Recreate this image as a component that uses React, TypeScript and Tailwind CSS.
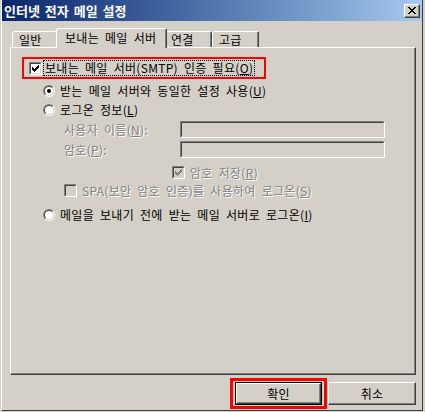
import React, { FC, ReactNode } from "react";

const font = { fontFamily: '"Noto Sans CJK KR", "Noto Sans", sans-serif' };

const Check: FC<{ color?: string }> = ({ color = "#000" }) => (
  <svg width="7" height="7" viewBox="0 0 7 7" shapeRendering="crispEdges">
    <path d="M0 2h1v3h-1zM1 3h1v3h-1zM2 4h1v3h-1zM3 3h1v3h-1zM4 2h1v3h-1zM5 1h1v3h-1zM6 0h1v3h-1z" fill={color} />
  </svg>
);

const CheckBox: FC<{ checked?: boolean; disabled?: boolean }> = ({ checked, disabled }) => (
  <span className="w-[13px] h-[13px] shrink-0 border border-t-[#808080] border-l-[#808080] border-b-white border-r-white flex">
    <span
      className={
        "flex-1 border border-t-[#404040] border-l-[#404040] border-b-[#d4d0c8] border-r-[#d4d0c8] flex items-center justify-center " +
        (disabled ? "bg-[#d4d0c8]" : "bg-white")
      }
    >
      {checked && <Check color={disabled ? "#808080" : "#000"} />}
    </span>
  </span>
);

const Radio: FC<{ checked?: boolean }> = ({ checked }) => (
  <span className="w-[12px] h-[12px] shrink-0 rounded-full border border-t-[#808080] border-l-[#808080] border-b-white border-r-white flex">
    <span className="flex-1 rounded-full bg-white border border-t-[#404040] border-l-[#404040] border-b-[#d4d0c8] border-r-[#d4d0c8] flex items-center justify-center">
      {checked && <span className="w-[4px] h-[4px] rounded-full bg-black" />}
    </span>
  </span>
);

const Label: FC<{ children: ReactNode; disabled?: boolean; className?: string }> = ({ children, disabled, className = "" }) => (
  <span
    className={
      "text-[12px] leading-[14px] whitespace-nowrap tracking-[0.3px] [word-spacing:3px] " +
      (disabled ? "text-[#808080] [text-shadow:1px_1px_0_#ffffff] " : "text-black ") +
      className
    }
  >
    {children}
  </span>
);

const Field: FC = () => (
  <span className="w-[205px] h-[17px] border border-t-[#808080] border-l-[#808080] border-b-white border-r-white flex">
    <span className="flex-1 bg-[#d4d0c8] border border-t-[#404040] border-l-[#404040] border-b-[#d4d0c8] border-r-[#d4d0c8]" />
  </span>
);

const Tab: FC<{ label: string; active?: boolean; className?: string }> = ({ label, active, className = "" }) => (
  <div
    className={
      "flex items-center border-l border-t border-white border-r border-r-[#404040] rounded-tl-[3px] rounded-tr-[2px] shadow-[inset_-1px_0_#808080] bg-[#d4d0c8] " +
      (active ? "h-[20px] -mb-px relative z-10 -mx-[2px] pb-[2px] " : "h-[16px] ") +
      className
    }
  >
    <span className="text-[12px] leading-[14px] tracking-[0.3px] [word-spacing:3px] whitespace-nowrap">{label}</span>
  </div>
);

const App: FC = () => {
  return (
    <div className="w-[425px] h-[412px] bg-[#d4d0c8] pl-px pr-[2px] pb-px flex" style={font}>
      <div className="flex-1 flex flex-col border-l border-white border-r border-b border-r-[#404040] border-b-[#404040]">
        {/* title bar */}
        <div className="h-[21px] flex items-center bg-gradient-to-r from-[#0a246a] to-[#a6caf0] pl-[2px] pr-[2px]">
          <span className="text-white font-bold text-[13px] leading-[15px] [word-spacing:2px]">인터넷 전자 메일 설정</span>
          <div className="ml-auto w-[16px] h-[14px] border border-t-white border-l-white border-r-[#404040] border-b-[#404040] shadow-[inset_-1px_-1px_#808080] bg-[#d4d0c8] flex items-center justify-center">
            <svg width="8" height="7" viewBox="0 0 8 7" shapeRendering="crispEdges">
              <path d="M0 0h2v1h-2zM6 0h2v1h-2zM1 1h2v1h-2zM5 1h2v1h-2zM2 2h4v1h-4zM3 3h2v1h-2zM2 4h4v1h-4zM1 5h2v1h-2zM5 5h2v1h-2zM0 6h2v1h-2zM6 6h2v1h-2z" fill="#000" />
            </svg>
          </div>
        </div>

        {/* tabs */}
        <div className="mt-[7px] ml-[10px] flex items-end h-[19px]">
          <Tab label="일반" className="w-[46px] pl-[6px]" />
          <Tab label="보내는 메일 서버" active className="w-[111px] pl-[8px]" />
          <Tab label="연결" className="w-[47px] pl-[5px]" />
          <Tab label="고급" className="w-[47px] pl-[6px]" />
        </div>

        {/* panel */}
        <div className="ml-[8px] w-[406px] h-[328px] border-l border-t border-white border-r border-b border-r-[#404040] border-b-[#404040] shadow-[inset_-1px_-1px_#808080] flex flex-col">
          <div className="mt-[9px] ml-[11px] w-[244px] h-[22px] border-2 border-[#ff0000] flex items-center pl-[5px]">
            <CheckBox checked />
            <span className="ml-px border border-dotted border-black px-px flex items-center h-[16px]">
              <Label>
                보내는 메일 서버(SMTP) 인증 필요(<u>O</u>)
              </Label>
            </span>
          </div>

          <div className="mt-[4px] ml-[32px] h-[16px] flex items-center gap-[5px]">
            <Radio checked />
            <Label>
              받는 메일 서버와 동일한 설정 사용(<u>U</u>)
            </Label>
          </div>

          <div className="mt-[3px] ml-[32px] h-[16px] flex items-center gap-[5px]">
            <Radio />
            <Label>
              로그온 정보(<u>L</u>)
            </Label>
          </div>

          <div className="mt-[3px] ml-[53px] h-[17px] flex items-center">
            <Label disabled className="w-[116px]">
              사용자 이름(<u>N</u>):
            </Label>
            <Field />
          </div>

          <div className="mt-[3px] ml-[53px] h-[17px] flex items-center">
            <Label disabled className="w-[116px]">
              암호(<u>P</u>):
            </Label>
            <Field />
          </div>

          <div className="mt-[8px] ml-[161px] h-[13px] flex items-center gap-[5px]">
            <CheckBox checked disabled />
            <Label disabled>
              암호 저장(<u>R</u>)
            </Label>
          </div>

          <div className="mt-[5px] ml-[53px] h-[13px] flex items-center gap-[5px]">
            <CheckBox disabled />
            <Label disabled>
              SPA(보안 암호 인증)를 사용하여 로그온(<u>S</u>)
            </Label>
          </div>

          <div className="mt-[10px] ml-[32px] h-[16px] flex items-center gap-[5px]">
            <Radio />
            <Label>
              메일을 보내기 전에 받는 메일 서버로 로그온(<u>I</u>)
            </Label>
          </div>
        </div>

        {/* buttons */}
        <div className="mt-[3px] flex items-center justify-end pr-[6px]">
          <div className="border-[3px] border-[#ff0000] px-[2px] py-px">
            <div className="w-[87px] h-[23px] border border-black flex">
              <div className="flex-1 border border-t-white border-l-white border-r-[#404040] border-b-[#404040] shadow-[inset_-1px_-1px_#808080] flex items-center justify-center">
                <span className="text-[12px] leading-[14px] tracking-[0.3px]">확인</span>
              </div>
            </div>
          </div>
          <div className="ml-px w-[88px] h-[23px] border border-t-white border-l-white border-r-[#404040] border-b-[#404040] shadow-[inset_-1px_-1px_#808080] flex items-center justify-center">
            <span className="text-[12px] leading-[14px] tracking-[0.3px]">취소</span>
          </div>
        </div>
      </div>
    </div>
  );
};

export default App;
